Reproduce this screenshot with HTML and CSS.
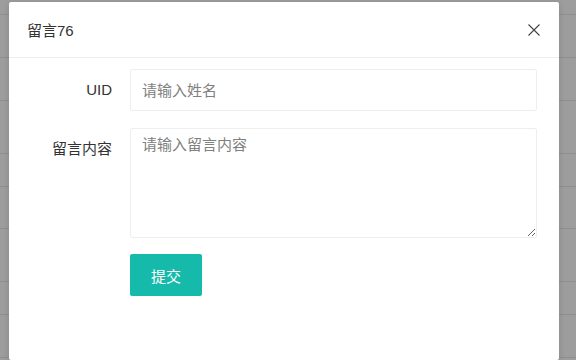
FILE: index.html
```html
<!DOCTYPE html>
<html lang="zh">
<head>
<meta charset="utf-8">
<link rel="stylesheet" href="styles.css">
</head>
<body>
<div class="backdrop">
  <div class="row r1"></div>
  <div class="row r2"></div>
  <div class="row r3"></div>
  <div class="row r4"></div>
  <div class="row r5"></div>
  <div class="row r6"></div>
  <div class="row r7"></div>
  <div class="row r8"></div>
  <div class="row r9"></div>
</div>
<div class="modal">
  <div class="modal-head">
    <span class="modal-title">留言76</span>
    <svg class="close" width="12" height="12" viewBox="0 0 12 12"><path d="M0.5 0.5L11.5 11.5M11.5 0.5L0.5 11.5" stroke="#444" stroke-width="1.1" fill="none"/></svg>
  </div>
  <form class="modal-body">
    <div class="form-item item-uid">
      <label class="form-label">UID</label>
      <input class="form-input" type="text" placeholder="请输入姓名">
    </div>
    <div class="form-item item-msg">
      <label class="form-label">留言内容</label>
      <textarea class="form-textarea" placeholder="请输入留言内容"></textarea>
    </div>
    <div class="form-item item-btn">
      <span class="form-label"></span>
      <button class="btn" type="button">提交</button>
    </div>
  </form>
</div>
</body>
</html>
```

FILE: styles.css
```css
html, body {
  margin: 0;
  padding: 0;
  width: 576px;
  height: 360px;
  overflow: hidden;
  background: #9d9d9d;
  font-family: "Liberation Sans", "Noto Sans CJK SC", sans-serif;
}
.backdrop {
  display: flex;
  flex-direction: column;
}
.row {
  border-bottom: 1px solid #8f8f8f;
  box-sizing: border-box;
}
.r1 { height: 15px; }
.r2 { height: 43px; }
.r3 { height: 43px; }
.r4 { height: 53px; }
.r5 { height: 33px; }
.r6 { height: 42px; }
.r7 { height: 53px; }
.r8 { height: 33px; }
.r9 { height: 43px; }
.modal {
  position: absolute;
  left: 9px;
  top: 2px;
  width: 550px;
  height: 358px;
  overflow: hidden;
  background: #fff;
  border-radius: 2px;
  box-shadow: 0 1px 6px rgba(0,0,0,0.15);
}
.modal-head {
  height: 55px;
  border-bottom: 1px solid #eee;
  display: flex;
  align-items: center;
  justify-content: space-between;
  padding: 0 19px 0 18px;
}
.modal-title {
  font-size: 15px;
  color: #333;
}
.close {
  display: block;
}
.modal-body {
  display: flex;
  flex-direction: column;
}
.form-item {
  display: flex;
  align-items: flex-start;
}
.item-uid { margin-top: 11px; }
.item-msg { margin-top: 17px; }
.item-btn { margin-top: 16px; }
.form-label {
  width: 103px;
  flex: none;
  text-align: right;
  font-size: 15px;
  color: #333;
  line-height: 42px;
  padding-right: 18px;
}
.item-msg .form-label {
  line-height: 20px;
  padding-top: 11px;
}
.form-input, .form-textarea {
  box-sizing: border-box;
  width: 407px;
  border: 1px solid #eee;
  border-radius: 2px;
  font-family: inherit;
  font-size: 15px;
  color: #333;
  outline: none;
  margin: 0;
}
.form-input {
  height: 42px;
  padding: 0 11px;
}
.form-textarea {
  height: 110px;
  padding: 6px 11px;
  line-height: 20px;
  resize: vertical;
}
.form-input::placeholder, .form-textarea::placeholder {
  color: #808080;
}
.btn {
  width: 72px;
  height: 42px;
  background: #16baaa;
  color: #fff;
  border: none;
  border-radius: 2px;
  font-family: inherit;
  font-size: 15px;
  padding: 0;
  margin: 0;
}
```
